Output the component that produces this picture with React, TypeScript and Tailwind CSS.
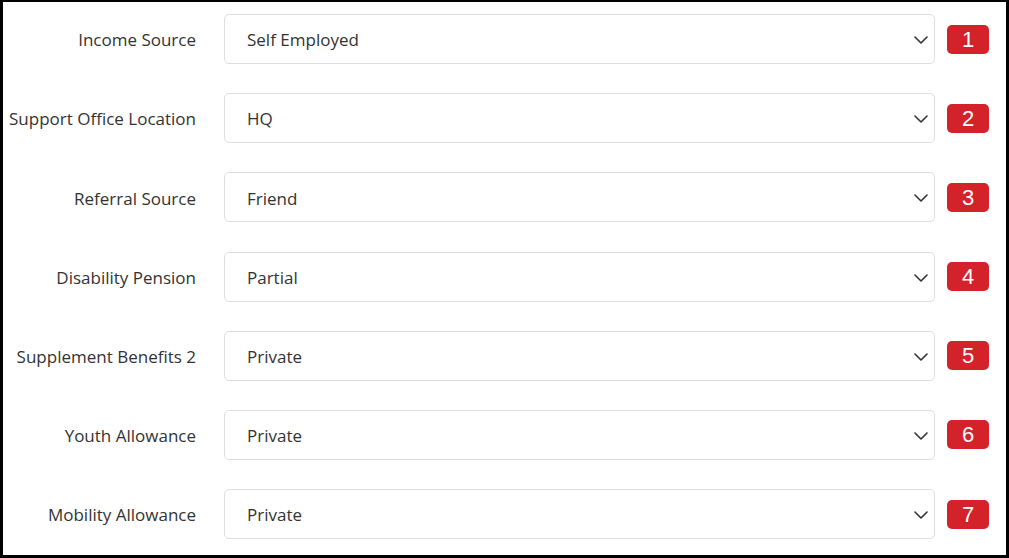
import React from 'react'

const rows = [
  { label: 'Income Source', value: 'Self Employed' },
  { label: 'Support Office Location', value: 'HQ' },
  { label: 'Referral Source', value: 'Friend' },
  { label: 'Disability Pension', value: 'Partial' },
  { label: 'Supplement Benefits 2', value: 'Private' },
  { label: 'Youth Allowance', value: 'Private' },
  { label: 'Mobility Allowance', value: 'Private' },
]

function Chevron() {
  return (
    <svg width="14" height="8" viewBox="0 0 14 8" fill="none">
      <polyline points="1,1 7,7 13,1" stroke="#333" strokeWidth="1.6" strokeLinecap="round" strokeLinejoin="round" />
    </svg>
  )
}

export default function App() {
  return (
    <div className="w-[1009px] h-[558px] bg-white border-x-[3px] border-t-2 border-b-[3px] border-black font-['Open_Sans',sans-serif] text-[#333]">
      <div className="flex flex-col gap-[29.2px] pt-[12px]">
        {rows.map((row, i) => (
          <div key={row.label} className="flex items-center h-[50px]">
            <label className="w-[193px] text-right text-[17px] pt-[2px] shrink-0">{row.label}</label>
            <div className="ml-[28px] w-[711px] h-[50px] border border-[#dedede] rounded-[5px] flex items-center justify-between pl-[22px] pr-[6px] pt-[2px] text-[17px]">
              <span>{row.value}</span>
              <Chevron />
            </div>
            <div className="ml-[12px] w-[42px] h-[29px] rounded-[5px] bg-[#d3222a] text-white flex items-center justify-center text-[22px] font-['Liberation_Sans',sans-serif]">
              {i + 1}
            </div>
          </div>
        ))}
      </div>
    </div>
  )
}
